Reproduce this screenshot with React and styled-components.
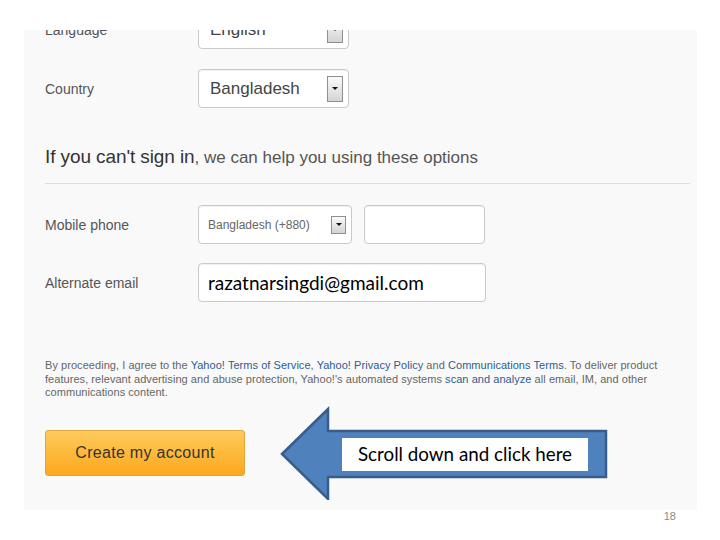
import React from "react";
import styled, { createGlobalStyle } from "styled-components";

const Global = createGlobalStyle`
  html, body { margin: 0; padding: 0; background: #ffffff; }
  body { font-family: "Liberation Sans", Arial, sans-serif; }
  * { box-sizing: border-box; }
`;

const Slide = styled.div`
  width: 720px;
  height: 540px;
  display: flex;
  flex-direction: column;
  padding-top: 30px;
  padding-left: 24px;
  background: #ffffff;
  overflow: hidden;
`;

const Shot = styled.div`
  width: 673px;
  height: 480px;
  background: #f9f9f9;
  overflow: hidden;
`;

const Form = styled.div`
  margin-top: -20px;
  padding-left: 21px;
  padding-right: 7px;
  display: flex;
  flex-direction: column;
`;

const Row = styled.div`
  display: grid;
  grid-template-columns: 153px auto;
  align-items: center;
  height: ${(p) => p.$h || 39}px;
  margin-top: ${(p) => p.$mt || 0}px;
`;

const Label = styled.div`
  font-size: 14px;
  color: #555555;
`;

const Fields = styled.div`
  display: flex;
  gap: 12px;
  height: 100%;
`;

const Select = styled.div`
  width: ${(p) => p.$w}px;
  height: 100%;
  background: #ffffff;
  border: 1px solid #c9c9c9;
  border-radius: 4px;
  box-shadow: inset 0 1px 1px rgba(0, 0, 0, 0.06);
  display: flex;
  align-items: center;
  justify-content: space-between;
  padding-left: ${(p) => p.$pl || 11}px;
  padding-right: 5px;
  font-size: ${(p) => p.$fs}px;
  color: ${(p) => p.$c || "#444444"};
`;

const DropButton = styled.div`
  width: ${(p) => p.$w}px;
  height: ${(p) => p.$h}px;
  border: 1px solid #8f8f8f;
  background: linear-gradient(#fafafa, #d4d4d4);
  display: flex;
  align-items: center;
  justify-content: center;
  &::after {
    content: "";
    border-left: 3px solid transparent;
    border-right: 3px solid transparent;
    border-top: 3px solid #111111;
  }
`;

const TextBox = styled.div`
  width: ${(p) => p.$w}px;
  height: 100%;
  background: #ffffff;
  border: 1px solid #c9c9c9;
  border-radius: 4px;
  box-shadow: inset 0 1px 1px rgba(0, 0, 0, 0.06);
  display: flex;
  align-items: center;
  padding-left: 9px;
  font-family: Lato, "Open Sans", sans-serif;
  font-size: 19px;
  color: #000000;
`;

const Heading = styled.div`
  margin-top: 38px;
  height: 24px;
  display: flex;
  align-items: baseline;
  color: #555555;
  font-size: 17px;
  white-space: pre;
`;

const HeadStrong = styled.span`
  font-size: 19px;
  color: #333333;
  letter-spacing: -0.1px;
`;

const Rule = styled.div`
  margin-top: 13px;
  height: 1px;
  background: #dddddd;
`;

const Terms = styled.div`
  margin-top: 57px;
  font-size: 11px;
  line-height: 13.5px;
  color: #666666;
  letter-spacing: 0.05px;
`;

const TermsLine = styled.div`
  white-space: nowrap;
`;

const Link = styled.span`
  color: #2d5c93;
`;

const ActionRow = styled.div`
  margin-top: 6px;
  display: flex;
  align-items: center;
  gap: 35px;
`;

const CreateButton = styled.div`
  width: 200px;
  height: 46px;
  border: 1px solid #e2a43c;
  border-radius: 3px;
  background: linear-gradient(#fecb5c, #fca81c);
  display: flex;
  align-items: center;
  justify-content: center;
  font-size: 16px;
  letter-spacing: 0.3px;
  color: #36332e;
`;

const Callout = styled.div`
  position: relative;
  width: 328px;
  height: 94px;
`;

const CalloutText = styled.div`
  position: absolute;
  left: 62px;
  top: 32px;
  width: 246px;
  height: 33px;
  background: #ffffff;
  display: flex;
  align-items: center;
  justify-content: center;
  padding-bottom: 2px;
  font-family: Lato, "Open Sans", sans-serif;
  font-size: 18.8px;
  color: #000000;
`;

const PageNumber = styled.div`
  width: 652px;
  text-align: right;
  font-family: "Liberation Sans", Arial, sans-serif;
  font-size: 11px;
  color: #8a8a8a;
  line-height: 12px;
`;

function Arrow() {
  return (
    <svg width="328" height="94" viewBox="0 0 328 94" style={{ display: "block" }}>
      <path
        d="M2 48 L48 3 L48 25 L326 25 L326 71 L48 71 L48 93 Z"
        fill="#4f81bd"
        stroke="#385d8a"
        strokeWidth="2.5"
        strokeLinejoin="miter"
      />
    </svg>
  );
}

export default function App() {
  return (
    <>
      <Global />
      <Slide>
        <Shot>
          <Form>
            <Row>
              <Label>Language</Label>
              <Fields>
                <Select $w={151} $fs={17}>
                  English
                  <DropButton $w={16} $h={26} />
                </Select>
              </Fields>
            </Row>
            <Row $mt={20}>
              <Label>Country</Label>
              <Fields>
                <Select $w={151} $fs={17}>
                  Bangladesh
                  <DropButton $w={16} $h={26} />
                </Select>
              </Fields>
            </Row>
            <Heading>
              <HeadStrong>If you can't sign in</HeadStrong>, we can help you using these options
            </Heading>
            <Rule />
            <Row $mt={21} $h={39}>
              <Label>Mobile phone</Label>
              <Fields>
                <Select $w={154} $fs={12} $pl={9} $c="#666666">
                  Bangladesh (+880)
                  <DropButton $w={15} $h={18} />
                </Select>
                <TextBox $w={121} />
              </Fields>
            </Row>
            <Row $mt={19} $h={39}>
              <Label>Alternate email</Label>
              <Fields>
                <TextBox $w={288}>razatnarsingdi@gmail.com</TextBox>
              </Fields>
            </Row>
            <Terms>
              <TermsLine>
                By proceeding, I agree to the <Link>Yahoo! Terms of Service</Link>,{" "}
                <Link>Yahoo! Privacy Policy</Link> and <Link>Communications Terms</Link>. To
                deliver product
              </TermsLine>
              <TermsLine>
                features, relevant advertising and abuse protection, Yahoo!'s automated systems{" "}
                <Link>scan and analyze</Link> all email, IM, and other
              </TermsLine>
              <TermsLine>communications content.</TermsLine>
            </Terms>
            <ActionRow>
              <CreateButton>Create my account</CreateButton>
              <Callout>
                <Arrow />
                <CalloutText>Scroll down and click here</CalloutText>
              </Callout>
            </ActionRow>
          </Form>
        </Shot>
        <PageNumber>18</PageNumber>
      </Slide>
    </>
  );
}
